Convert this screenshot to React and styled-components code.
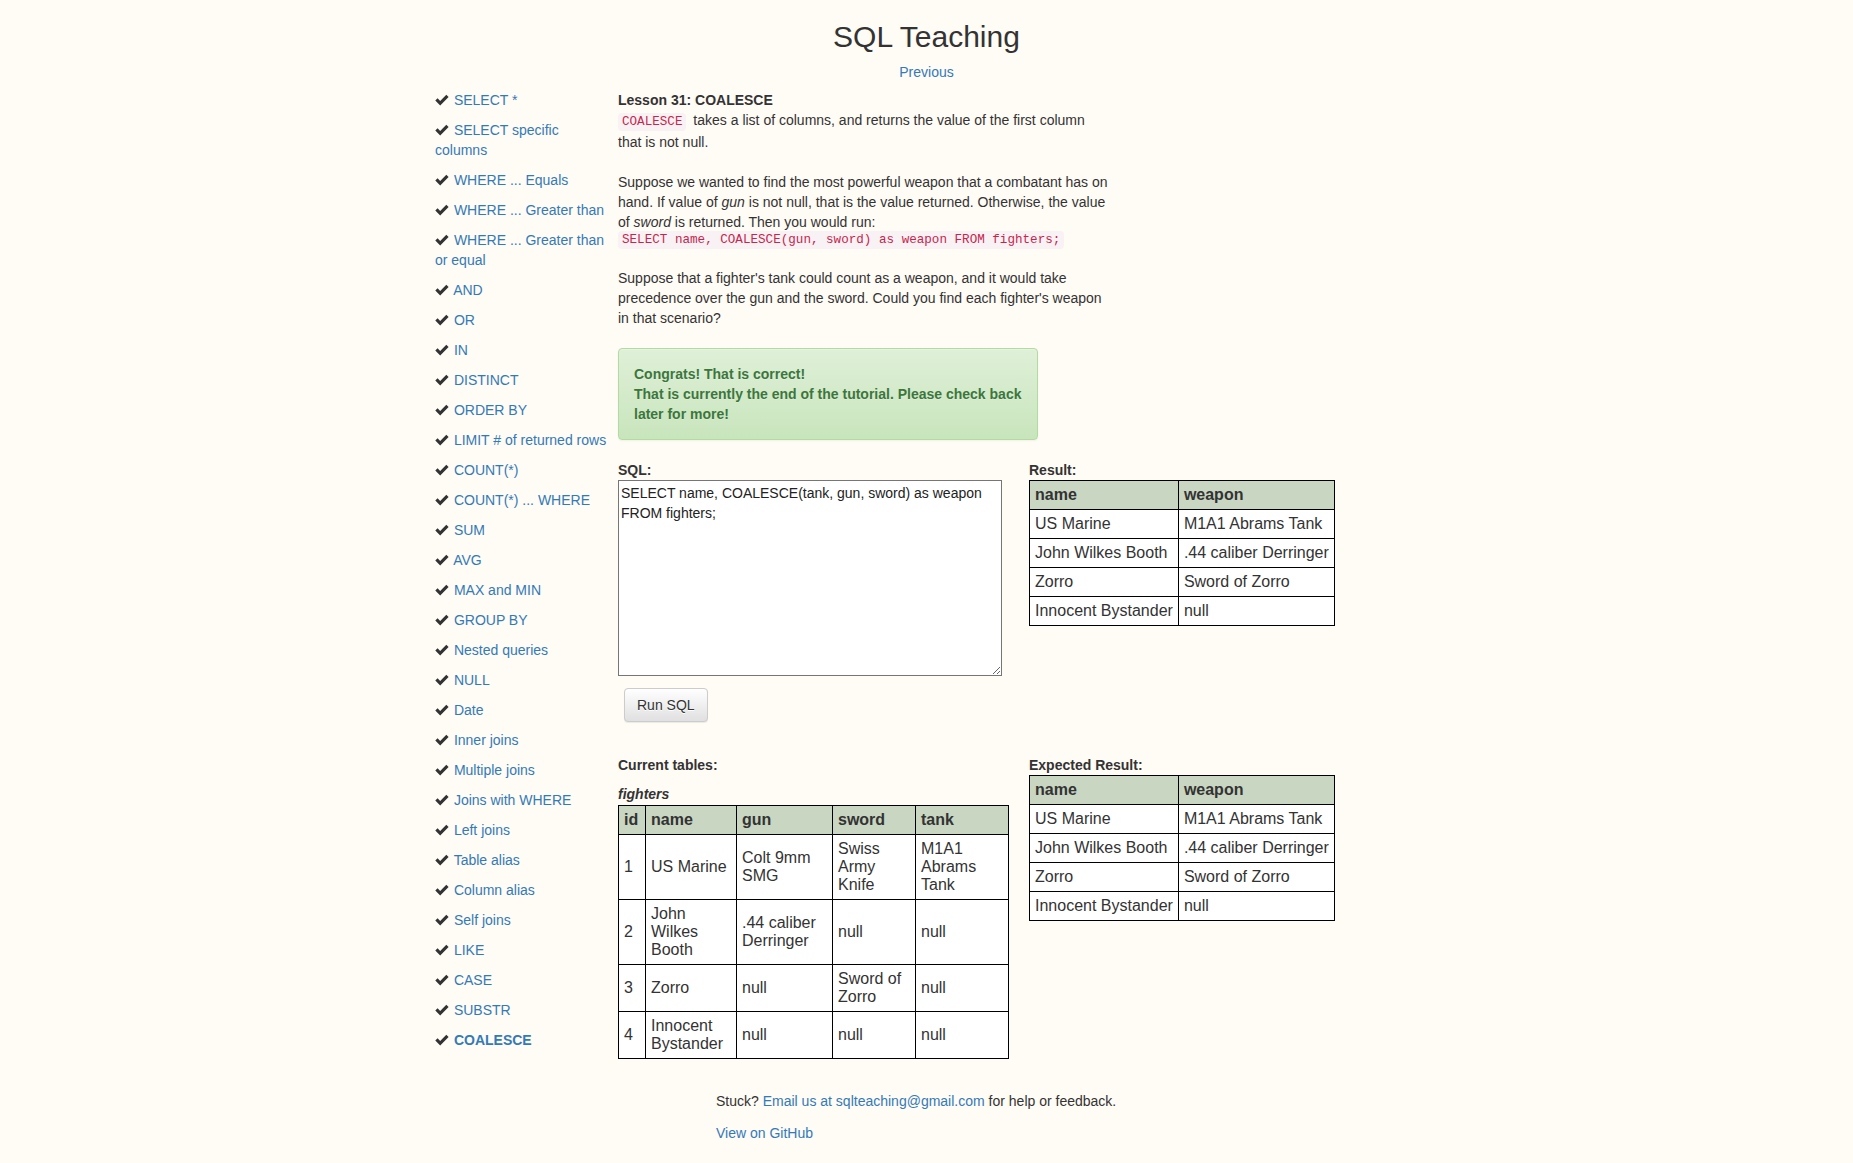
import React from "react";
import styled, { createGlobalStyle } from "styled-components";

const GlobalStyle = createGlobalStyle`
  *, *::before, *::after { box-sizing: border-box; }
  html, body { margin: 0; padding: 0; }
  body {
    background: #fffbf5;
    font-family: "Liberation Sans", Arial, sans-serif;
    font-size: 14px;
    line-height: 20px;
    color: #333;
  }
`;

const Page = styled.div`
  width: 100%;
  padding-bottom: 21px;
`;

const Title = styled.h1`
  margin: 20px 0 0;
  font-size: 30px;
  line-height: 34px;
  font-weight: 500;
  text-align: center;
  color: #333;
`;

const Nav = styled.div`
  margin-top: 8px;
  text-align: center;
`;

const Link = styled.a`
  color: #337ab7;
  text-decoration: none;
  font-weight: ${(p) => (p.$active ? "bold" : "normal")};
  cursor: pointer;
  &:hover { text-decoration: underline; color: #23527c; }
`;

const Layout = styled.div`
  width: 983px;
  margin: 8px auto 0;
  display: flex;
  gap: 7px;
  align-items: flex-start;
`;

const Sidebar = styled.ul`
  width: 176px;
  flex: none;
  list-style: none;
  margin: 0;
  padding: 0;
`;

const SideItem = styled.li`
  line-height: 20px;
  margin-bottom: 10px;
`;

const CheckSvg = styled.svg`
  width: 14px;
  height: 12px;
  vertical-align: -1px;
  margin-right: 1px;
`;

const Check = () => (
  <CheckSvg viewBox="0 0 14 12" aria-hidden="true">
    <path d="M0.3 6.6 L2.6 4.3 L5.2 6.9 L11.3 0.8 L13.6 3.1 L5.2 11.5 Z" fill="#333" />
  </CheckSvg>
);

const Main = styled.div`
  flex: 1;
  min-width: 0;
`;

const Strong = styled.div`
  font-weight: bold;
`;

const Description = styled.div`
  width: 491px;
`;

const CodeLine = styled.div`
  line-height: 12px;
  margin-bottom: 2px;
`;

const InlineCode = styled.code`
  font-family: "Liberation Mono", "Courier New", monospace;
  font-size: 90%;
  color: #c7254e;
  background: #f9f2f4;
  padding: 2px 4px;
  margin-right: 3px;
  border-radius: 4px;
`;

const Alert = styled.div`
  width: 420px;
  margin: 20px 0;
  padding: 15px;
  border: 1px solid #b2dba1;
  border-radius: 4px;
  background-image: linear-gradient(to bottom, #dff0d8 0, #c8e5bc 100%);
  color: #3c763d;
  font-weight: bold;
  text-shadow: 0 1px 0 rgba(255, 255, 255, 0.2);
  box-shadow: inset 0 1px 0 rgba(255, 255, 255, 0.25), 0 1px 2px rgba(0, 0, 0, 0.05);
`;

const Columns = styled.div`
  display: flex;
  gap: 21px;
  align-items: flex-start;
  margin-top: ${(p) => p.$top || 0}px;
`;

const Column = styled.div`
  width: ${(p) => p.$w}px;
  flex: none;
`;

const Label = styled.div`
  font-weight: bold;
  margin-bottom: ${(p) => p.$mb || 0}px;
  font-style: ${(p) => (p.$italic ? "italic" : "normal")};
`;

const SqlInput = styled.textarea`
  display: block;
  width: 384px;
  height: 196px;
  margin: 0;
  padding: 2px;
  border: 1px solid #767676;
  background: #fff;
  font-family: "Liberation Sans", Arial, sans-serif;
  font-size: 14px;
  line-height: 20px;
  color: #222;
  resize: both;
`;

const RunButton = styled.button`
  display: inline-block;
  margin: 12px 0 0 6px;
  padding: 6px 12px;
  font-family: "Liberation Sans", Arial, sans-serif;
  font-size: 14px;
  line-height: 20px;
  color: #333;
  border: 1px solid #ccc;
  border-radius: 4px;
  background-image: linear-gradient(to bottom, #fff 0, #e0e0e0 100%);
  text-shadow: 0 1px 0 #fff;
  box-shadow: inset 0 1px 0 rgba(255, 255, 255, 0.15), 0 1px 1px rgba(0, 0, 0, 0.075);
  cursor: pointer;
`;

const DataTable = styled.table`
  border-collapse: collapse;
  table-layout: ${(p) => (p.$fixed ? "fixed" : "auto")};
  width: ${(p) => (p.$width ? `${p.$width}px` : "auto")};
  font-size: 16px;
  line-height: normal;
  background: #fff;
`;

const HeadCell = styled.th`
  width: ${(p) => (p.$w ? `${p.$w}px` : "auto")};
  padding: 5px;
  border: 1px solid #000;
  background: #c9d6c2;
  text-align: left;
  font-weight: bold;
  color: #333;
`;

const Cell = styled.td`
  padding: 5px;
  border: 1px solid #000;
  vertical-align: middle;
  color: #333;
`;

const Footer = styled.div`
  width: 421px;
  margin: 31px auto 0;
`;

const FooterLine = styled.p`
  margin: ${(p) => p.$top || 0}px 0 0;
`;

const lessons = [
  "SELECT *",
  "SELECT specific columns",
  "WHERE ... Equals",
  "WHERE ... Greater than",
  "WHERE ... Greater than or equal",
  "AND",
  "OR",
  "IN",
  "DISTINCT",
  "ORDER BY",
  "LIMIT # of returned rows",
  "COUNT(*)",
  "COUNT(*) ... WHERE",
  "SUM",
  "AVG",
  "MAX and MIN",
  "GROUP BY",
  "Nested queries",
  "NULL",
  "Date",
  "Inner joins",
  "Multiple joins",
  "Joins with WHERE",
  "Left joins",
  "Table alias",
  "Column alias",
  "Self joins",
  "LIKE",
  "CASE",
  "SUBSTR",
  "COALESCE",
];

const resultRows = [
  ["US Marine", "M1A1 Abrams Tank"],
  ["John Wilkes Booth", ".44 caliber Derringer"],
  ["Zorro", "Sword of Zorro"],
  ["Innocent Bystander", "null"],
];

const fighterCols = [
  ["id", 27],
  ["name", 91],
  ["gun", 96],
  ["sword", 83],
  ["tank", 93],
];

const fighters = [
  ["1", "US Marine", "Colt 9mm SMG", "Swiss Army Knife", "M1A1 Abrams Tank"],
  ["2", "John Wilkes Booth", ".44 caliber Derringer", "null", "null"],
  ["3", "Zorro", "null", "Sword of Zorro", "null"],
  ["4", "Innocent Bystander", "null", "null", "null"],
];

const ResultTable = () => (
  <DataTable>
    <thead>
      <tr>
        <HeadCell>name</HeadCell>
        <HeadCell>weapon</HeadCell>
      </tr>
    </thead>
    <tbody>
      {resultRows.map((r) => (
        <tr key={r[0]}>
          <Cell>{r[0]}</Cell>
          <Cell>{r[1]}</Cell>
        </tr>
      ))}
    </tbody>
  </DataTable>
);

export default function App() {
  return (
    <Page>
      <GlobalStyle />
      <Title>SQL Teaching</Title>
      <Nav>
        <Link href="#">Previous</Link>
      </Nav>
      <Layout>
        <Sidebar>
          {lessons.map((l, i) => (
            <SideItem key={l}>
              <Check /> <Link href="#" $active={i === lessons.length - 1}>{l}</Link>
            </SideItem>
          ))}
        </Sidebar>
        <Main>
          <Strong>Lesson 31: COALESCE</Strong>
          <Description>
            <InlineCode>COALESCE</InlineCode> takes a list of columns, and returns the value of the first column that is not null.
            <br />
            <br />
            Suppose we wanted to find the most powerful weapon that a combatant has on hand. If value of <i>gun</i> is not null, that is the value returned. Otherwise, the value of <i>sword</i> is returned. Then you would run:
            <CodeLine>
              <InlineCode>SELECT name, COALESCE(gun, sword) as weapon FROM fighters;</InlineCode>
            </CodeLine>
            <br />
            Suppose that a fighter's tank could count as a weapon, and it would take precedence over the gun and the sword. Could you find each fighter's weapon in that scenario?
          </Description>
          <Alert>
            Congrats! That is correct!
            <br />
            That is currently the end of the tutorial. Please check back later for more!
          </Alert>
          <Columns>
            <Column $w={390}>
              <Label>SQL:</Label>
              <SqlInput defaultValue="SELECT name, COALESCE(tank, gun, sword) as weapon FROM fighters;" />
              <RunButton type="button">Run SQL</RunButton>
            </Column>
            <Column $w={389}>
              <Label>Result:</Label>
              <ResultTable />
            </Column>
          </Columns>
          <Columns $top={33}>
            <Column $w={390}>
              <Label $mb={9}>Current tables:</Label>
              <Label $italic $mb={1}>fighters</Label>
              <DataTable $fixed $width={390}>
                <thead>
                  <tr>
                    {fighterCols.map(([c, w]) => (
                      <HeadCell key={c} $w={w}>{c}</HeadCell>
                    ))}
                  </tr>
                </thead>
                <tbody>
                  {fighters.map((r) => (
                    <tr key={r[0]}>
                      {r.map((v, j) => (
                        <Cell key={j}>{v}</Cell>
                      ))}
                    </tr>
                  ))}
                </tbody>
              </DataTable>
            </Column>
            <Column $w={389}>
              <Label>Expected Result:</Label>
              <ResultTable />
            </Column>
          </Columns>
        </Main>
      </Layout>
      <Footer>
        <FooterLine>
          Stuck? <Link href="#">Email us at sqlteaching@gmail.com</Link> for help or feedback.
        </FooterLine>
        <FooterLine $top={12}>
          <Link href="#">View on GitHub</Link>
        </FooterLine>
      </Footer>
    </Page>
  );
}
